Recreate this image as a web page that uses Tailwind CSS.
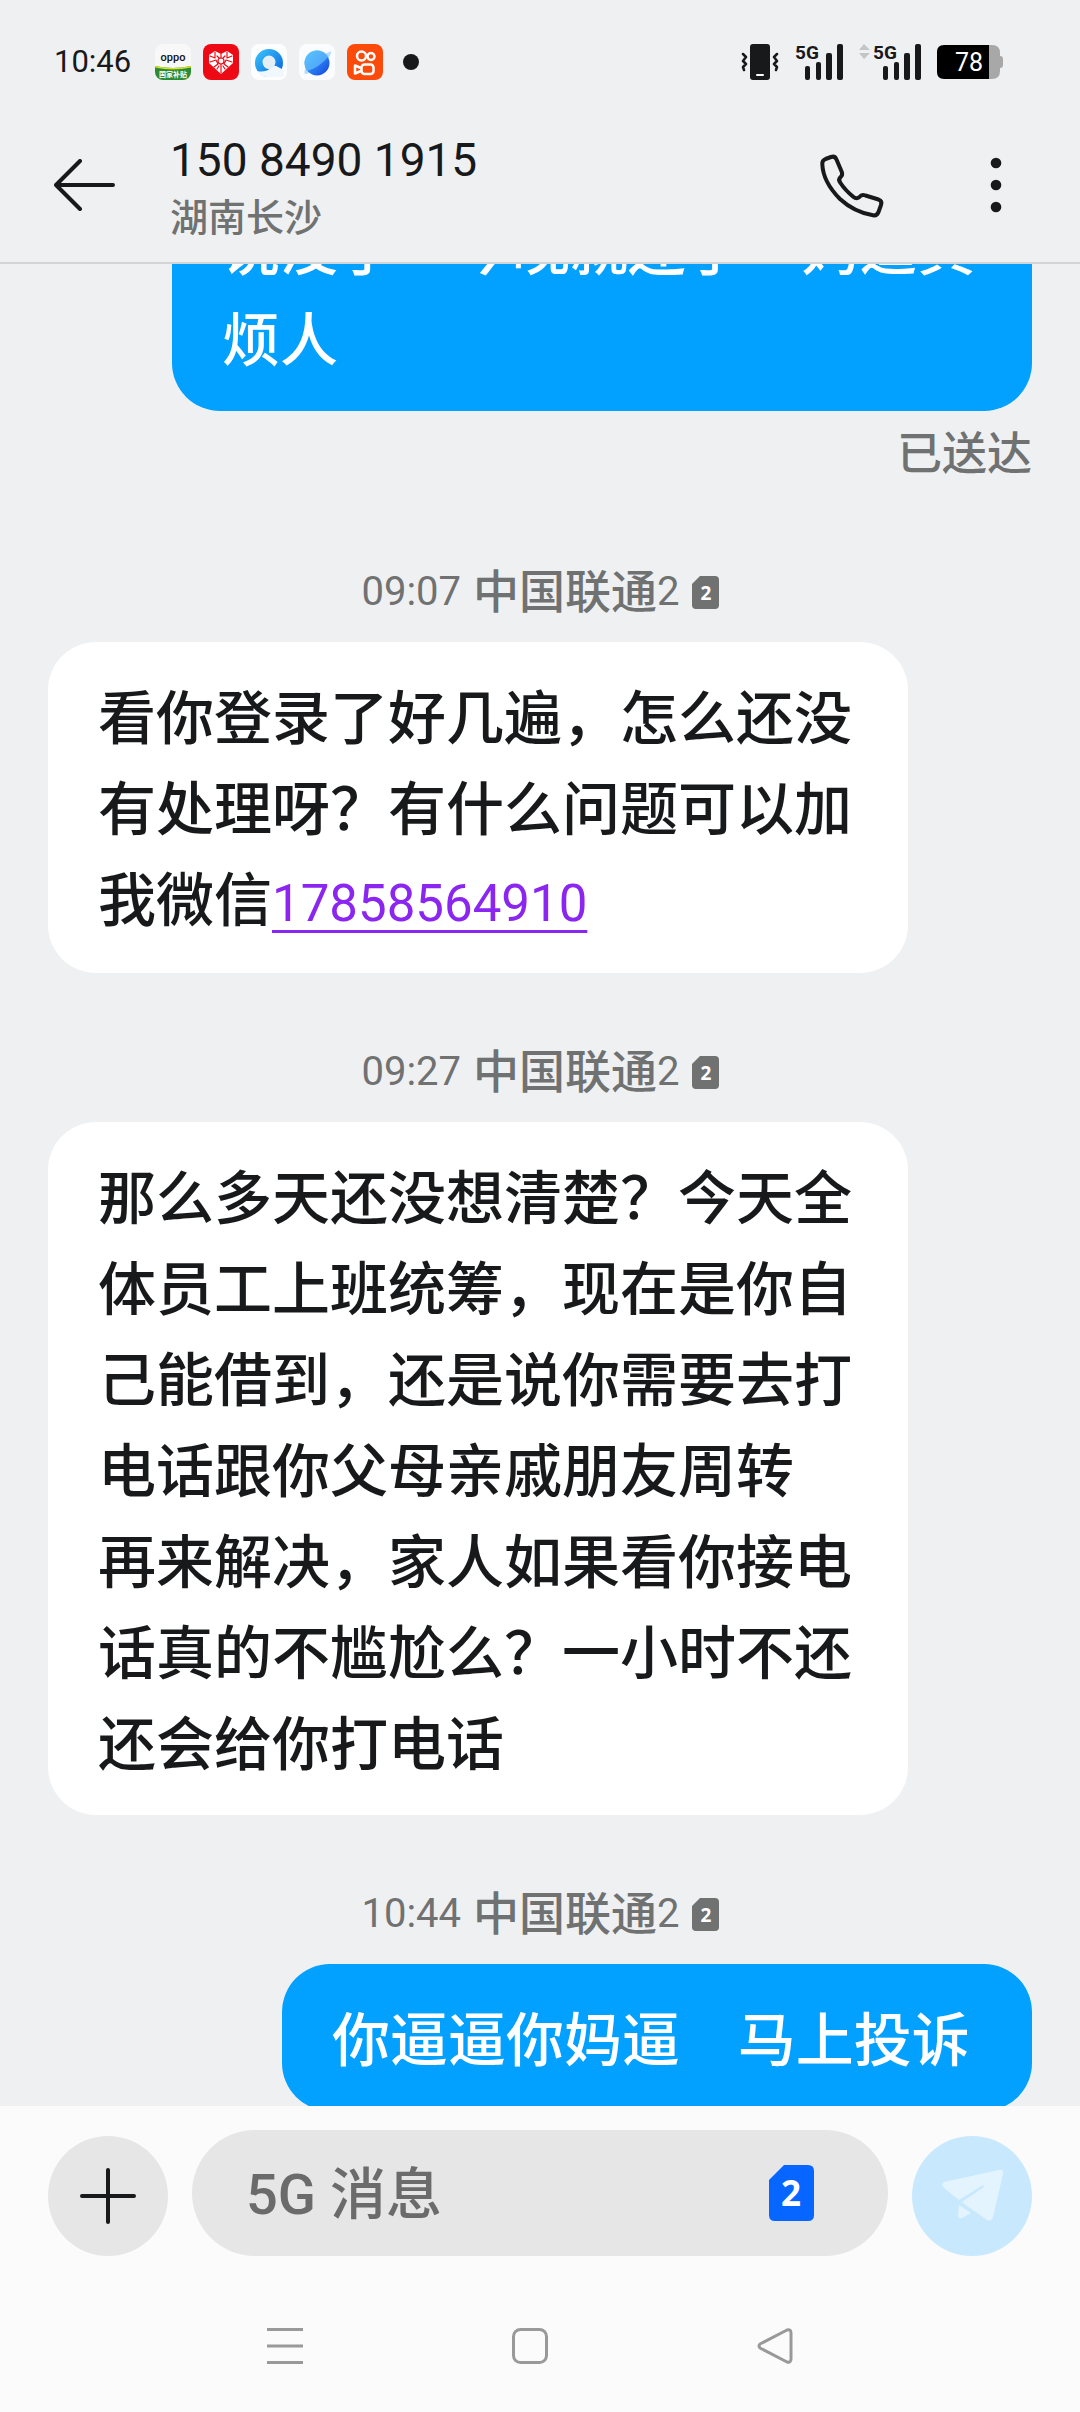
<!DOCTYPE html>
<html lang="zh-CN">
<head>
  <meta charset="UTF-8" />
  <meta name="viewport" content="width=device-width, initial-scale=1.0"/>
  <title>150 8490 1915</title>
  <script src="https://cdn.jsdelivr.net/npm/@tailwindcss/browser@4"></script>
</head>
<body class="h-screen flex flex-col overflow-hidden bg-[#eff0f2] text-[#18191a] font-['Roboto','Noto_Sans_CJK_SC',sans-serif]">

  <!-- Status bar -->
  <div class="h-[124px] shrink-0 flex items-center justify-between pl-[54px] pr-[77px]">
    <div class="flex items-center gap-3">
      <span class="text-[31px] leading-9 mr-3">10:46</span>
      <svg class="size-9" viewBox="0 0 36 36">
        <rect width="36" height="36" rx="8" fill="#f8f8f8"/>
        <path d="M0 22q18 4 36 0v6a8 8 0 0 1-8 8H8a8 8 0 0 1-8-8z" fill="#2b8a32"/>
        <path d="M0 22q18 4 36 0v1.500q-18 4-36 0z" fill="#d9e021"/>
        <text x="18" y="17" font-size="11" font-weight="500" text-anchor="middle" fill="#111">oppo</text>
        <text x="18" y="33" font-size="7" font-weight="700" text-anchor="middle" fill="#fff">国家补贴</text>
      </svg>
      <svg class="size-9" viewBox="0 0 36 36" fill="none" stroke-linecap="round" stroke-linejoin="round">
        <rect width="36" height="36" rx="8" fill="#ee0a14"/>
        <path d="M18 30 6 19v-8l6-4 6 3 6-3 6 4v8z" fill="#fff"/>
        <path d="M18 10v4M18 20v9M12 8v6l-5-2M24 8v6l5-2M7 18l6-2 2 4-4 3M29 18l-6-2-2 4 4 3M14 12l2 2M22 12l-2 2M14 25l2-3M22 25l-2-3" stroke="#ee0a14" stroke-width="1.200"/>
        <circle cx="18" cy="17" r="3" stroke="#ee0a14" stroke-width="1.200"/>
      </svg>
      <svg class="size-9" viewBox="0 0 36 36">
        <defs>
          <linearGradient id="ring" x1="0" y1="0" x2="1" y2="1"><stop offset="0" stop-color="#35b8f8"/><stop offset="1" stop-color="#0b6fe0"/></linearGradient>
          <linearGradient id="planet" x1="0" y1="0" x2="1" y2="1"><stop offset="0" stop-color="#41c4ff"/><stop offset="1" stop-color="#1540e0"/></linearGradient>
        </defs>
        <rect width="36" height="36" rx="8" fill="#fdfdfe"/>
        <circle cx="18" cy="19" r="10" fill="none" stroke="url(#ring)" stroke-width="8"/>
        <path d="M6 27q8 2 14-3 3-4 7-1 6 2 6 7 0 3-4 3H15q-6-1-9-6z" fill="#f0f7fd"/>
        <circle cx="18" cy="18" r="6.500" fill="#e4eef6"/>
      </svg>
      <svg class="size-9" viewBox="0 0 36 36">
        <rect width="36" height="36" rx="8" fill="#fbfcff"/>
        <path d="M6 30Q3 25 15 17T32 7q1 6-11 15T6 30z" fill="#b5dcff"/>
        <circle cx="18" cy="19" r="12.500" fill="url(#planet)"/>
        <path d="M6 22a12.500 12.500 0 0 1 20-13l4 3Q20 24 8 27z" fill="#6ccaff" opacity=".6"/>
      </svg>
      <svg class="size-9" viewBox="0 0 36 36" fill="none" stroke="#fff" stroke-width="2.500" stroke-linejoin="round">
        <rect width="36" height="36" rx="8" fill="#fc4a0b" stroke="none"/>
        <circle cx="14.500" cy="12" r="4.500"/>
        <circle cx="24" cy="12.500" r="3.500"/>
        <rect x="14.500" y="20.500" width="12" height="9.500" rx="3"/>
        <path d="M14 24 8 21.500v8l6-2.500"/>
      </svg>
      <span class="size-4 ml-2 rounded-full bg-[#18191a]"></span>
    </div>

    <div class="flex items-center gap-4">
      <svg class="w-[38px] h-9" viewBox="0 0 38 36" fill="none" stroke="#18191a" stroke-width="2.500" stroke-linecap="round" stroke-linejoin="round">
        <rect x="9" width="20" height="36" rx="3" fill="#18191a" stroke="none"/>
        <path d="M16 31h6" stroke="#fff" stroke-width="2"/>
        <path d="M2 10l3 3-3 4 3 3-3 3 1 3M36 10l-3 3 3 4-3 3 3 3-1 3"/>
      </svg>
      <svg class="w-12 h-9 overflow-visible" viewBox="0 0 48 36" fill="#18191a">
        <text x="0" y="15" font-size="19" font-weight="700">5G</text>
        <rect x="10" y="22" width="5" height="14" rx="2"/>
        <rect x="21" y="18" width="5" height="18" rx="2"/>
        <rect x="31" y="9" width="6" height="27" rx="2"/>
        <rect x="42" y="0" width="6" height="36" rx="2"/>
      </svg>
      <svg class="w-[62px] h-9 overflow-visible" viewBox="0 0 62 36" fill="#18191a">
        <path d="M0 6l5-6 6 6zM0 9h11l-6 6z" fill="#c4c5c6"/>
        <text x="14" y="15" font-size="19" font-weight="700">5G</text>
        <rect x="24" y="22" width="5" height="14" rx="2"/>
        <rect x="35" y="18" width="5" height="18" rx="2"/>
        <rect x="45" y="9" width="6" height="27" rx="2"/>
        <rect x="56" y="0" width="6" height="36" rx="2"/>
      </svg>
      <svg class="w-[66px] h-[34px]" viewBox="0 0 66 34">
        <path d="M52 0h3q8 0 8 8v3q3 0 3 3v6q0 3-3 3v3q0 8-8 8h-3z" fill="#a8a8a8"/>
        <path d="M7 0h45v34H7q-7 0-7-7V7q0-7 7-7z" fill="#000"/>
        <text x="32" y="26" font-size="25" text-anchor="middle" fill="#fff">78</text>
      </svg>
    </div>
  </div>

  <!-- Contact -->
  <header class="h-[140px] shrink-0 flex items-center pl-[54px] pr-[66px] pb-4 border-b-2 border-[#d3d4d5]">
    <button aria-label="返回" class="mr-[55px]">
      <svg class="w-[61px] h-[52px]" viewBox="0 0 61 52" fill="none" stroke="#18191a" stroke-width="4" stroke-linecap="round" stroke-linejoin="round"><path d="M59 26H2M26 2 2 26l24 24"/></svg>
    </button>
    <div class="flex-1 pt-2">
      <h1 class="text-[46px] leading-[58px]">150 8490 1915</h1>
      <p class="text-[38px] leading-[58px] font-medium text-[#707171]">湖南长沙</p>
    </div>
    <button aria-label="拨打电话" class="mr-[92px]">
      <svg class="size-[68px]" viewBox="0 0 68 68" fill="none" stroke="#18191a" stroke-width="4" stroke-linejoin="round"><path d="M4.300 13Q4 9.500 7.500 8L13 6Q17 4.500 18.500 8.500L23.800 21Q25 24 22.600 26 19.800 28.500 22.500 32 27 39 35.500 46 38.500 48.500 41.500 46 43.500 43 47.500 44.500L60.500 48.500Q64.500 50 63 54L60.500 61Q59 65 55 64.300 36 61 22 48 5 31 4.300 13Z"/></svg>
    </button>
    <button aria-label="更多" class="px-3">
      <svg class="w-3 h-14" viewBox="0 0 12 56" fill="#18191a"><circle cx="6" cy="6" r="5.300"/><circle cx="6" cy="28" r="5.300"/><circle cx="6" cy="50" r="5.300"/></svg>
    </button>
  </header>

  <!-- Messages -->
  <main class="flex-1 min-h-0 overflow-hidden px-12">
    <div class="-mt-[91px] flex flex-col items-start text-[58px] leading-[91px] font-medium">
      <div class="self-end w-[860px] max-w-full px-[50px] pt-8 pb-6 rounded-[48px] bg-[#02a0ff] text-white whitespace-pre">说没了    今晚就还了    妈逼真<br>烦人</div>
      <p class="self-end mt-3 text-[45px] leading-[64px] text-[#707171]">已送达</p>

      <div class="self-center mt-[73px] mb-[18px] flex items-center text-[40px] leading-[64px] text-[#707171]">
        <time class="font-normal">09:07</time>
        <span class="ml-3 text-[46px]">中国联通</span><span class="font-normal">2</span>
        <svg class="ml-3 w-[27px] h-[33px]" viewBox="0 0 27 33"><path d="M8 0h15q4 0 4 4v25q0 4-4 4H4q-4 0-4-4V8z" fill="#707171"/><text x="14" y="24" font-size="19" font-weight="700" font-family="Open Sans, sans-serif" text-anchor="middle" fill="#fff">2</text></svg>
      </div>
      <div class="w-[860px] max-w-full px-[50px] pt-8 pb-6 rounded-[48px] bg-white">看你登录了好几遍，怎么还没<br>有处理呀？有什么问题可以加<br>我微信<a href="tel:17858564910" class="text-[51px] font-normal text-[#8a26f0] underline decoration-[3px] underline-offset-[9px]">17858564910</a></div>

      <div class="self-center mt-[67px] mb-[18px] flex items-center text-[40px] leading-[64px] text-[#707171]">
        <time class="font-normal">09:27</time>
        <span class="ml-3 text-[46px]">中国联通</span><span class="font-normal">2</span>
        <svg class="ml-3 w-[27px] h-[33px]" viewBox="0 0 27 33"><path d="M8 0h15q4 0 4 4v25q0 4-4 4H4q-4 0-4-4V8z" fill="#707171"/><text x="14" y="24" font-size="19" font-weight="700" font-family="Open Sans, sans-serif" text-anchor="middle" fill="#fff">2</text></svg>
      </div>
      <div class="w-[860px] max-w-full px-[50px] pt-8 pb-6 rounded-[48px] bg-white">那么多天还没想清楚？今天全<br>体员工上班统筹，现在是你自<br>己能借到，还是说你需要去打<br>电话跟你父母亲戚朋友周转<br>再来解决，家人如果看你接电<br>话真的不尴尬么？一小时不还<br>还会给你打电话</div>

      <div class="self-center mt-[67px] mb-[18px] flex items-center text-[40px] leading-[64px] text-[#707171]">
        <time class="font-normal">10:44</time>
        <span class="ml-3 text-[46px]">中国联通</span><span class="font-normal">2</span>
        <svg class="ml-3 w-[27px] h-[33px]" viewBox="0 0 27 33"><path d="M8 0h15q4 0 4 4v25q0 4-4 4H4q-4 0-4-4V8z" fill="#707171"/><text x="14" y="24" font-size="19" font-weight="700" font-family="Open Sans, sans-serif" text-anchor="middle" fill="#fff">2</text></svg>
      </div>
      <div class="self-end w-[750px] max-w-full px-[50px] pt-8 pb-6 rounded-[48px] bg-[#02a0ff] text-white whitespace-pre">你逼逼你妈逼    马上投诉</div>
    </div>
  </main>

  <!-- Compose bar -->
  <footer class="shrink-0 bg-[#fbfbfb] pt-6">
    <form class="flex items-end gap-6 px-12">
      <button type="button" aria-label="添加" class="size-[120px] shrink-0 rounded-full bg-[#e6e6e6] flex items-center justify-center">
        <svg class="size-14" viewBox="0 0 56 56" stroke="#18191a" stroke-width="4" stroke-linecap="round"><path d="M28 2v52M2 28h52"/></svg>
      </button>
      <div class="flex-1 min-w-0 h-[126px] rounded-full bg-[#e6e6e6] flex items-center pl-[54px] pr-[74px]">
        <input type="text" aria-label="消息" placeholder="5G 消息" class="flex-1 min-w-0 h-full pt-1 text-[56px] font-medium bg-transparent outline-none placeholder:text-[#6b6b6b]"/>
        <button type="button" aria-label="SIM 2" class="shrink-0">
          <svg class="w-[45px] h-14" viewBox="0 0 45 56"><path d="M15 0h24q6 0 6 6v44q0 6-6 6H6q-6 0-6-6V15z" fill="#0666ff"/><text x="22" y="41" font-size="35" font-weight="700" font-family="Open Sans, sans-serif" text-anchor="middle" fill="#fff">2</text></svg>
        </button>
      </div>
      <button type="submit" aria-label="发送" class="size-[120px] shrink-0 rounded-full bg-[#c8e9fd]">
        <svg class="size-[120px]" viewBox="0 0 120 120" fill="#e4f4fe">
          <path d="M32 46 87 34q5-1 4 4L81 81q-2 5-6 3L54 69 50 66 72 51 71 49 47 64 31 51q-2-3 1-5z"/>
          <path d="M47 69l12 8-9 5q-4 1-4-3z"/>
        </svg>
      </button>
    </form>

    <nav class="h-[156px] flex items-center justify-center gap-[209px] pr-5 pt-6">
      <button aria-label="最近任务"><svg class="size-9" viewBox="0 0 36 36" stroke="#999" stroke-width="3"><path d="M0 1.500h36M0 18h36M0 34.500h36"/></svg></button>
      <button aria-label="主屏幕"><svg class="size-9" viewBox="0 0 36 36" fill="none" stroke="#999" stroke-width="3"><rect x="1.500" y="1.500" width="33" height="33" rx="7"/></svg></button>
      <button aria-label="返回上一级"><svg class="size-9" viewBox="0 0 36 36" fill="none" stroke="#999" stroke-width="3" stroke-linejoin="round"><path d="M30 2 3 16q-2 2 0 4l27 14q4 1 4-3V5q0-4-4-3z"/></svg></button>
    </nav>
  </footer>

</body>
</html>
